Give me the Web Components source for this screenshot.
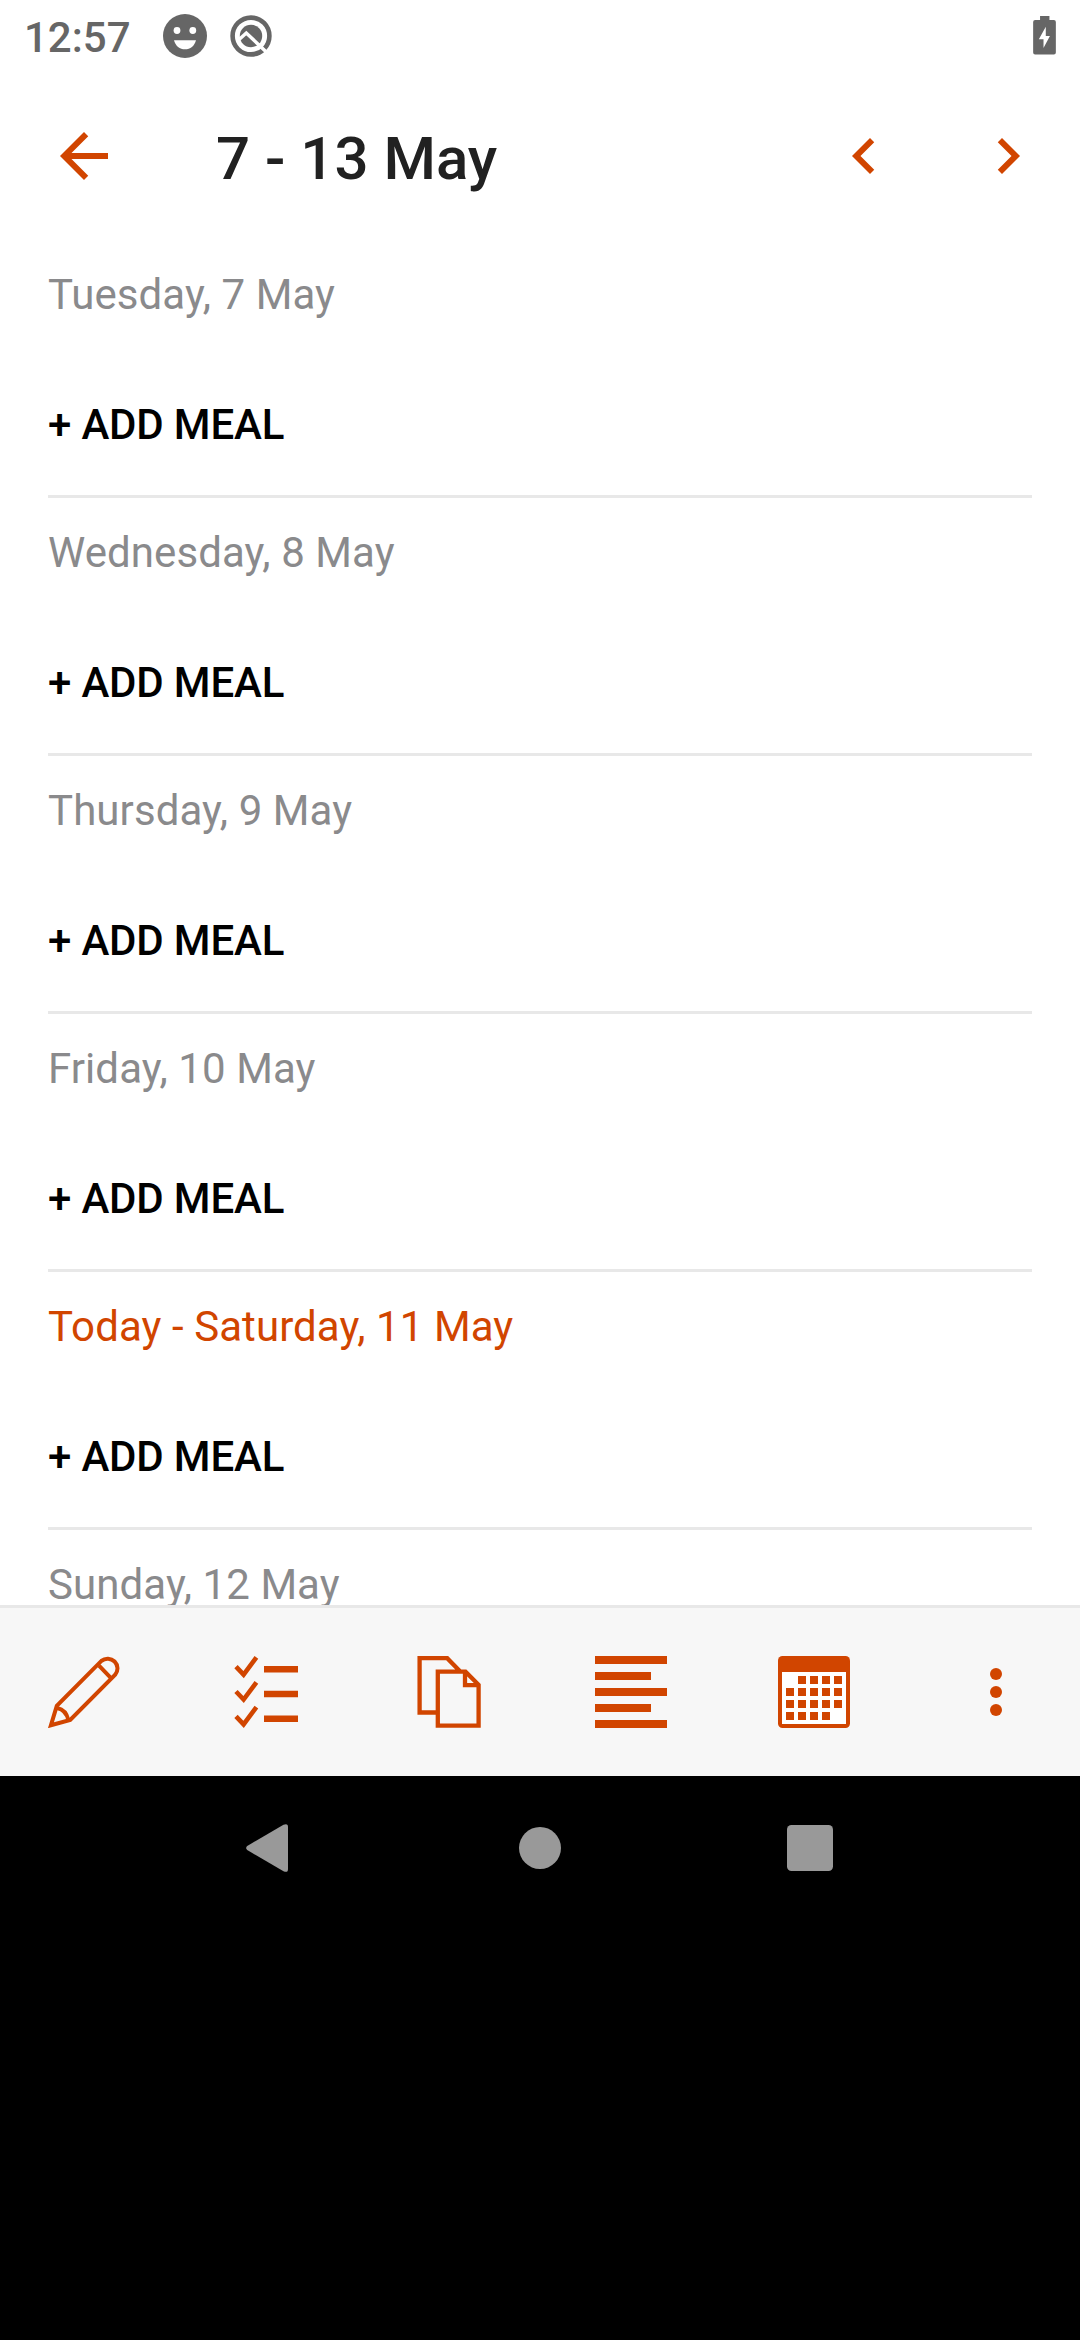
<!DOCTYPE html>
<html lang="en">
<head>
<meta charset="utf-8">
<title>Meal planner</title>
<style>
html, body { margin: 0; height: 100%; }
body { background: #000; overflow: hidden; font-family: Roboto, "Noto Sans", sans-serif; }
</style>
</head>
<body>
<meal-planner></meal-planner>
<script>
const define = (name, html) => {
  const template = document.createElement('template');
  template.innerHTML = html;
  customElements.define(name, class extends HTMLElement {
    constructor() {
      super();
      this.attachShadow({ mode: 'open' }).append(template.content.cloneNode(true));
    }
  });
};

const ICONS = {
  back: ['0 0 24 24', '<path d="M20 11H7.83l5.59-5.59L12 4l-8 8 8 8 1.41-1.41L7.83 13H20z"/>'],
  prev: ['0 0 24 24', '<path d="M15.41 7.41 14 6l-6 6 6 6 1.41-1.41L10.83 12z"/>'],
  next: ['0 0 24 24', '<path d="M10 6 8.59 7.41 13.17 12l-4.58 4.59L10 18l6-6z"/>'],
  pencil: ['0 0 72 72', '<g fill="none" stroke="currentColor" stroke-width="4"><path stroke-miterlimit="10" d="M2.9 69.3 8.8 49.9 53.4 4.9A9.8 9.8 0 0 1 67.2 18.7L22.2 63.9Z"/><path d="M51 9.7 62.3 21.3M9.2 52Q18.2 54 20.3 64"/></g>'],
  checks: ['0 0 72 72', '<g fill="none" stroke="currentColor" stroke-width="4.6"><path d="M6 10.6 13.6 18.6 26.4 1.4M6 35.5 13.6 43.5 26.4 26.3M6 60.4 13.6 68.4 26.4 51.2"/></g><path d="M34 10h34v6.6H34zM34 34.8h34v6.4H34zM34 59.4h34V66H34z"/>'],
  copy: ['0 0 72 72', '<g fill="none" stroke="currentColor" stroke-width="4.3"><path d="M22.8 56.5H6.6V2.2H34.2L47 15.2M24.8 15.7H52.5L65.6 28.8V69.7H24.8ZM52 15.7V29.2H65.6"/></g>'],
  lines: ['0 0 72 72', '<path d="M0 0h72v8H0zM0 16h56v8H0zM0 32h72v8H0zM0 48h56v8H0zM0 64h72v8H0z"/>'],
  calendar: ['0 0 72 72', '<rect width="72" height="72" rx="4.5"/><path fill="#fff" d="M4 16h64v52H4z"/><path d="M20 20h8v8h-8zM32 20h8v8h-8zM44 20h8v8h-8zM56 20h8v8h-8zM8 32h8v8H8zM20 32h8v8h-8zM32 32h8v8h-8zM44 32h8v8h-8zM56 32h8v8h-8zM8 44h8v8H8zM20 44h8v8h-8zM32 44h8v8h-8zM44 44h8v8h-8zM56 44h8v8h-8zM8 56h8v8H8zM20 56h8v8h-8zM32 56h8v8h-8zM44 56h8v8h-8z"/>'],
  more: ['0 0 72 72', '<circle cx="36" cy="18" r="6"/><circle cx="36" cy="36" r="6"/><circle cx="36" cy="54" r="6"/>'],
  smiley: ['0 0 44 44', '<circle cx="22" cy="22" r="22"/><g fill="#fff"><circle cx="14" cy="16.5" r="3.4"/><circle cx="29.8" cy="16.5" r="3.4"/><path d="M11 26.2H33C31.5 32 27.3 35.3 22 35.3S12.5 32 11 26.2Z"/></g>'],
  ring: ['0 0 42 42', '<circle cx="21" cy="21" r="18.4" fill="none" stroke="currentColor" stroke-width="4.6"/><circle cx="21" cy="21" r="11.2"/><path fill="none" stroke="#fff" stroke-width="3.4" d="M8 25.5 16.3 18 39 39.500"/>'],
  battery: ['0 0 23 39', '<path d="M7 0h9.5v4H21q2 0 2 2v31q0 2-2 2H2q-2 0-2-2V6q0-2 2-2h5z"/><path fill="#fff" d="M12.8 11 5.8 23.5h4.7V32.5L17 20.2h-4.2z"/>'],
  navback: ['0 0 42 48', '<path d="M1.2 22 37.5.8Q42-1.2 42 3V45Q42 49.2 37.5 47.2L1.2 26Q-.9 24 1.2 22Z"/>'],
  navhome: ['0 0 42 42', '<circle cx="21" cy="21" r="21"/>'],
  navrecent: ['0 0 46 46', '<rect width="46" height="46" rx="4.5"/>']
};

customElements.define('ui-icon', class extends HTMLElement {
  connectedCallback() {
    if (this.shadowRoot) return;
    const [box, shapes] = ICONS[this.getAttribute('name')];
    this.attachShadow({ mode: 'open' }).innerHTML = `
      <style>
        :host { display: block; flex: none; width: 72px; height: 72px; }
        svg { display: block; width: 100%; height: 100%; fill: currentColor; }
      </style>
      <svg viewBox="${box}" aria-hidden="true">${shapes}</svg>`;
  }
});

define('status-bar', `
  <style>
    :host { display: flex; align-items: flex-start; height: 72px; box-sizing: border-box;
      padding: 0 24px; color: #666; font-size: 42px; font-weight: 500; line-height: 49px; }
    .time { margin-top: 13px; width: 139px; }
    .smiley { width: 44px; height: 44px; margin-top: 14px; }
    .ring { width: 42px; height: 42px; margin: 14.5px 0 0 23px; }
    .battery { width: 23px; height: 38.5px; margin: 16px 0 0 auto; }
  </style>
  <span class="time">12:57</span>
  <ui-icon class="smiley" name="smiley"></ui-icon>
  <ui-icon class="ring" name="ring"></ui-icon>
  <ui-icon class="battery" name="battery"></ui-icon>`);

define('app-bar', `
  <style>
    :host { display: flex; align-items: center; height: 168px; box-sizing: border-box;
      padding: 0 36px 0 48px; color: #d14500; }
    h1 { margin: 0 auto 0 96px; padding-top: 5px; color: #212121; font-size: 60px;
      font-weight: 500; line-height: 70px; white-space: nowrap; }
    nav { display: flex; gap: 72px; }
  </style>
  <ui-icon name="back"></ui-icon>
  <h1><slot></slot></h1>
  <nav><ui-icon name="prev"></ui-icon><ui-icon name="next"></ui-icon></nav>`);

define('meal-day', `
  <style>
    :host { display: flex; flex-direction: column; flex: none; gap: 81px; height: 258px;
      box-sizing: border-box; padding-top: 30px; border-bottom: 3px solid #e8e8e8;
      font-size: 42px; line-height: 49px; letter-spacing: .08px; color: #8a8a8c;
      white-space: nowrap; }
    :host([today]) { color: #d14500; }
    .add { color: #000; font-weight: 500; letter-spacing: -.17px; }
  </style>
  <div><slot></slot></div>
  <div class="add">+ ADD MEAL</div>`);

define('tool-bar', `
  <style>
    :host { display: flex; justify-content: space-between; flex: none; height: 171px;
      box-sizing: border-box; padding: 48px 48px 0; border-top: 3px solid #e8e8e8;
      background: #f7f7f7; color: #d14500; }
  </style>
  <ui-icon name="pencil"></ui-icon>
  <ui-icon name="checks"></ui-icon>
  <ui-icon name="copy"></ui-icon>
  <ui-icon name="lines"></ui-icon>
  <ui-icon name="calendar"></ui-icon>
  <ui-icon name="more"></ui-icon>`);

define('system-nav', `
  <style>
    :host { display: grid; grid-template-columns: repeat(3, 270px); justify-content: center;
      place-items: center; height: 144px; background: #000; color: #999; }
    .back { width: 42px; height: 48px; margin-right: 6px; }
    .home { width: 42px; height: 42px; }
    .recent { width: 46px; height: 46px; }
  </style>
  <ui-icon class="back" name="navback"></ui-icon>
  <ui-icon class="home" name="navhome"></ui-icon>
  <ui-icon class="recent" name="navrecent"></ui-icon>`);

define('meal-planner', `
  <style>
    :host { display: block; width: 1080px; height: 2340px; background: #000; }
    .screen { display: flex; flex-direction: column; height: 1776px; background: #fff; }
    status-bar, app-bar { flex: none; }
    main { display: flex; flex-direction: column; flex: 1; min-height: 0; overflow: hidden;
      padding: 0 48px; }
  </style>
  <div class="screen">
    <status-bar></status-bar>
    <app-bar>7 - 13 May</app-bar>
    <main>
      <meal-day>Tuesday, 7 May</meal-day>
      <meal-day>Wednesday, 8 May</meal-day>
      <meal-day>Thursday, 9 May</meal-day>
      <meal-day>Friday, 10 May</meal-day>
      <meal-day today>Today - Saturday, 11 May</meal-day>
      <meal-day>Sunday, 12 May</meal-day>
    </main>
    <tool-bar></tool-bar>
  </div>
  <system-nav></system-nav>`);
</script>
</body>
</html>
